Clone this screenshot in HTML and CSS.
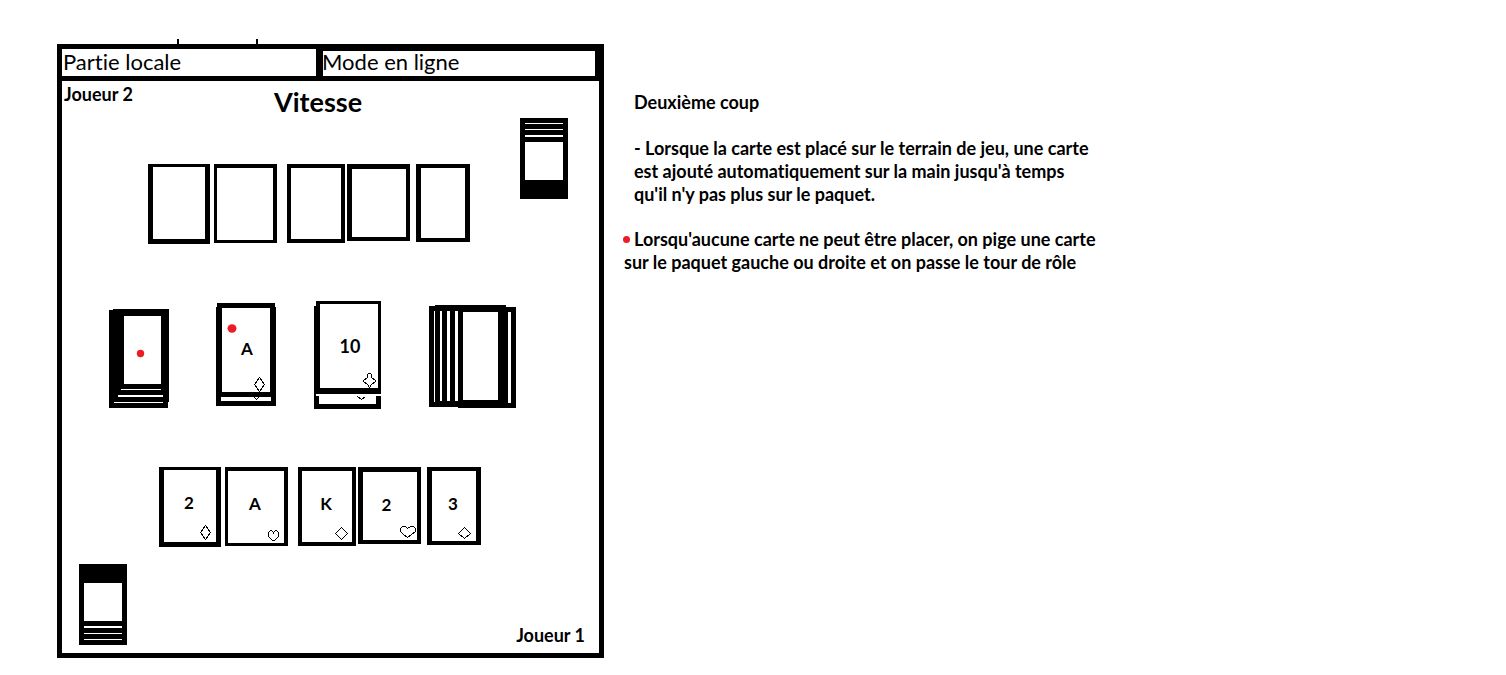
FILE: index.html
```html
<!DOCTYPE html>
<html lang="fr">
<head>
<meta charset="utf-8">
<title>Vitesse</title>
<link rel="stylesheet" href="styles.css">
</head>
<body>
<main class="page">
  <section class="board">
    <nav class="tabs">
      <button class="tab tab-local" type="button">Partie locale</button>
      <button class="tab tab-online" type="button">Mode en ligne</button>
    </nav>

    <div class="opponent">
      <div class="opponent-side">
        <header class="heading">
          <p class="player">Joueur 2</p>
          <h1 class="title">Vitesse</h1>
        </header>
        <div class="hand hand-top">
          <div class="card card-1"></div>
          <div class="card card-2"></div>
          <div class="card card-3"></div>
          <div class="card card-4"></div>
          <div class="card card-5"></div>
        </div>
      </div>
      <svg class="deck deck-top" width="48" height="81" viewBox="0 0 48 81" shape-rendering="crispEdges">
        <rect width="48" height="81"/>
        <path fill="#fff" d="M5 5h38v1H5zM5 11h38v1H5zM5 17h38v2H5zM5 24h38v38H5z"/>
      </svg>
    </div>

    <div class="piles">
      <svg width="60" height="108" viewBox="0 0 60 108">
        <g shape-rendering="crispEdges">
          <path d="M0 9H4V8H60V101H59V107H0Z"/>
          <path fill="#fff" d="M15 15h37v68H15zM12 88h40v1H12zM9 94h45v2H9zM5 101h49v1H5z"/>
        </g>
        <circle class="dot" cx="31.5" cy="52.5" r="3.7"/>
      </svg>
      <svg width="60" height="108" viewBox="0 0 60 108">
        <g shape-rendering="crispEdges">
          <path d="M1 2H59V6H60V105H0V6H1Z"/>
          <path fill="#fff" d="M6 7h48v84H6zM5 96h50v4H5z"/>
          <path class="line" d="M43.5 76.500L48.500 83.500L43.500 90.500L38.500 83.500ZM38.500 96.500L40.500 98.500L42.500 96.500"/>
        </g>
        <ellipse class="dot" cx="16" cy="27.500" rx="4.500" ry="4.200"/>
        <text class="pile-value" x="31" y="54">A</text>
      </svg>
      <svg width="67" height="108" viewBox="0 0 67 108">
        <g shape-rendering="crispEdges">
          <path d="M0 5H2V0H67V93H2V95H5V103H62V95H67V108H0Z"/>
          <path fill="#fff" d="M6 3h58v84H6z"/>
          <path class="line" d="M53.500 76.500V73.500L54.500 72.500H56.500L57.500 73.500V76.500L61.500 79.500V80.500L57.500 83.500L55.500 86.500L53.500 83.500L49.500 80.500V79.500ZM43.500 95.500L47.500 98.500L51.500 95.500"/>
        </g>
        <text class="pile-value pile-value-large" x="36" y="52">10</text>
      </svg>
      <svg width="87" height="108" viewBox="0 0 87 108" shape-rendering="crispEdges">
        <path d="M0 5H6V4H77V6H87V107H29V106H0Z"/>
        <path fill="#fff" d="M5 10h1v91H5zM11 10h2v90H11zM18 10h3v90H18zM26 10h3v90H26zM34 11h35v88H34zM79 11h3v91H79z"/>
      </svg>
    </div>

    <div class="hand hand-bottom">
      <div class="card card-1">
        <span class="value">2</span>
        <svg class="suit" width="12" height="16" viewBox="0 0 12 16"><path class="line" shape-rendering="crispEdges" d="M5.500 .5L10.500 7.500L5.500 14.500L.5 7.500Z"/></svg>
      </div>
      <div class="card card-2">
        <span class="value">A</span>
        <svg class="suit" width="12" height="12" viewBox="0 0 12 12"><path class="line" shape-rendering="crispEdges" d="M5.500 3.500V2.500L3.500 .5H2.500L.5 2.500V6.500L4.500 10.500H6.500L10.500 6.500V2.500L8.500 .5H7.500L5.500 2.500"/></svg>
      </div>
      <div class="card card-3">
        <span class="value">K</span>
        <svg class="suit" width="13" height="14" viewBox="0 0 13 14"><path class="line" shape-rendering="crispEdges" d="M6.500 .5L12.500 6.500L6.500 12.500L.5 6.500Z"/></svg>
      </div>
      <div class="card card-4">
        <span class="value">2</span>
        <svg class="suit" width="16" height="13" viewBox="0 0 16 13"><path class="line" shape-rendering="crispEdges" d="M7.500 2.500L5.500 .5H2.500L.5 2.500V5.500L3.500 8.500L7.500 11.500L11.500 8.500L15.500 5.500V2.500L13.500 .5H10.500Z"/></svg>
      </div>
      <div class="card card-5">
        <span class="value">3</span>
        <svg class="suit" width="14" height="13" viewBox="0 0 14 13"><path class="line" shape-rendering="crispEdges" d="M6.500 .5L12.500 6.500L6.500 11.500L.5 6.500Z"/></svg>
      </div>
    </div>

    <footer class="own">
      <svg class="deck" width="48" height="81" viewBox="0 0 48 81" shape-rendering="crispEdges">
        <rect width="48" height="81"/>
        <path fill="#fff" d="M5 19h38v38H5zM5 62h38v2H5zM5 69h38v1H5zM5 75h38v1H5z"/>
      </svg>
      <p class="player">Joueur 1</p>
    </footer>
  </section>

  <article class="notes">
    <h2 class="notes-title">Deuxième coup</h2>
    <p class="note">- Lorsque la carte est placé sur le terrain de jeu, une carte<br>est ajouté automatiquement sur la main jusqu'à temps<br>qu'il n'y pas plus sur le paquet.</p>
    <p class="note note-marked">Lorsqu'aucune carte ne peut être placer, on pige une carte<br>sur le paquet gauche ou droite et on passe le tour de rôle</p>
  </article>
</main>
</body>
</html>
```

FILE: styles.css
```css
*,
*::before {
  box-sizing: border-box;
}

body {
  margin: 0;
  background: #fff;
  color: #000;
  font: bold 18px/23px Lato, "Open Sans", sans-serif;
  font-variant-ligatures: none;
}

h1, h2, p {
  margin: 0;
}

svg {
  display: block;
  flex: none;
}

.page {
  display: grid;
  grid-template-columns: minmax(540px, 547fr) 882fr;
  column-gap: 20px;
  align-items: start;
  padding: 44px 0 16px 57px;
}

.board {
  position: relative;
  border: 5px solid #000;
}

/* two small pegs standing on the top edge */
.board::before {
  content: "";
  position: absolute;
  top: -10px;
  left: 115px;
  width: 81px;
  height: 5px;
  border: solid #000;
  border-width: 0 2px;
}

.tabs {
  display: grid;
  grid-template: 27px / 261fr 276fr;
  border-bottom: 5px solid #000;
}

.tab {
  margin: 0;
  padding: 0 0 2px 1px;
  border: 0 solid #000;
  border-radius: 0;
  background: #fff;
  color: #000;
  font: 22px/24px Lato, "Open Sans", sans-serif;
  font-variant-ligatures: none;
  text-align: left;
}

.tab-local {
  border-right-width: 7px;
}

.tab-online {
  padding: 0 0 3px;
  border-top-width: 2px;
  border-right-width: 4px;
  line-height: 22px;
  text-indent: -1px;
}

.opponent {
  display: flex;
  justify-content: space-between;
}

.heading {
  display: grid;
  grid-template-columns: 210px auto;
  align-items: start;
  height: 83px;
  padding: 3px 0 0 2px;
}

.player {
  line-height: 20px;
}

.title {
  padding-top: 2px;
  font-size: 27px;
  line-height: 32px;
}

.deck-top {
  margin: 37px 31px 0 0;
}

.hand {
  display: grid;
  grid-template-columns: 66px 73px 60px 69px 54px;
  align-items: start;
}

.hand-top {
  padding-left: 86px;
}

.hand-bottom {
  padding-left: 97px;
}

.card {
  display: flex;
  flex-direction: column;
  justify-content: space-between;
  align-items: center;
  padding: 21px 4px 1px 2px;
  border: 4px solid #000;
}

.card-1 {
  width: 62px;
  height: 80px;
  border-width: 3px 5px 5px;
}

.card-2 {
  width: 63px;
  height: 79px;
  border-width: 4px 4px 3px 3px;
}

.card-3 {
  width: 58px;
  height: 79px;
}

.card-4 {
  width: 63px;
  height: 77px;
  padding-right: 1px;
  border-width: 5px 4px 4px 5px;
}

.card-4 .value {
  padding-right: 8px;
}

.card-5 {
  width: 54px;
  height: 78px;
  border-width: 4px 5px;
}

.value {
  font-size: 17px;
}

.suit {
  align-self: flex-end;
}

.line {
  fill: none;
  stroke: #000;
}

.dot {
  fill: #ed1c24;
}

.piles {
  display: grid;
  grid-template-columns: 107px 98px 115px 87px;
  padding: 57px 0 58px 47px;
}

.pile-value {
  font-size: 17px;
  text-anchor: middle;
}

.pile-value-large {
  font-size: 18px;
}

.own {
  display: flex;
  justify-content: space-between;
  align-items: flex-end;
  padding: 17px 14px 8px 17px;
}

.notes {
  padding: 47px 0 0 10px;
}

.notes-title {
  font-size: 18px;
  line-height: 23px;
}

.note {
  margin-top: 23px;
}

.note-marked {
  position: relative;
  margin-top: 22px;
  margin-left: -10px;
  text-indent: 10px;
}

.note-marked::before {
  content: "";
  position: absolute;
  top: 8px;
  left: -1px;
  width: 7px;
  height: 7px;
  border-radius: 50%;
  background: #ed1c24;
}
```
